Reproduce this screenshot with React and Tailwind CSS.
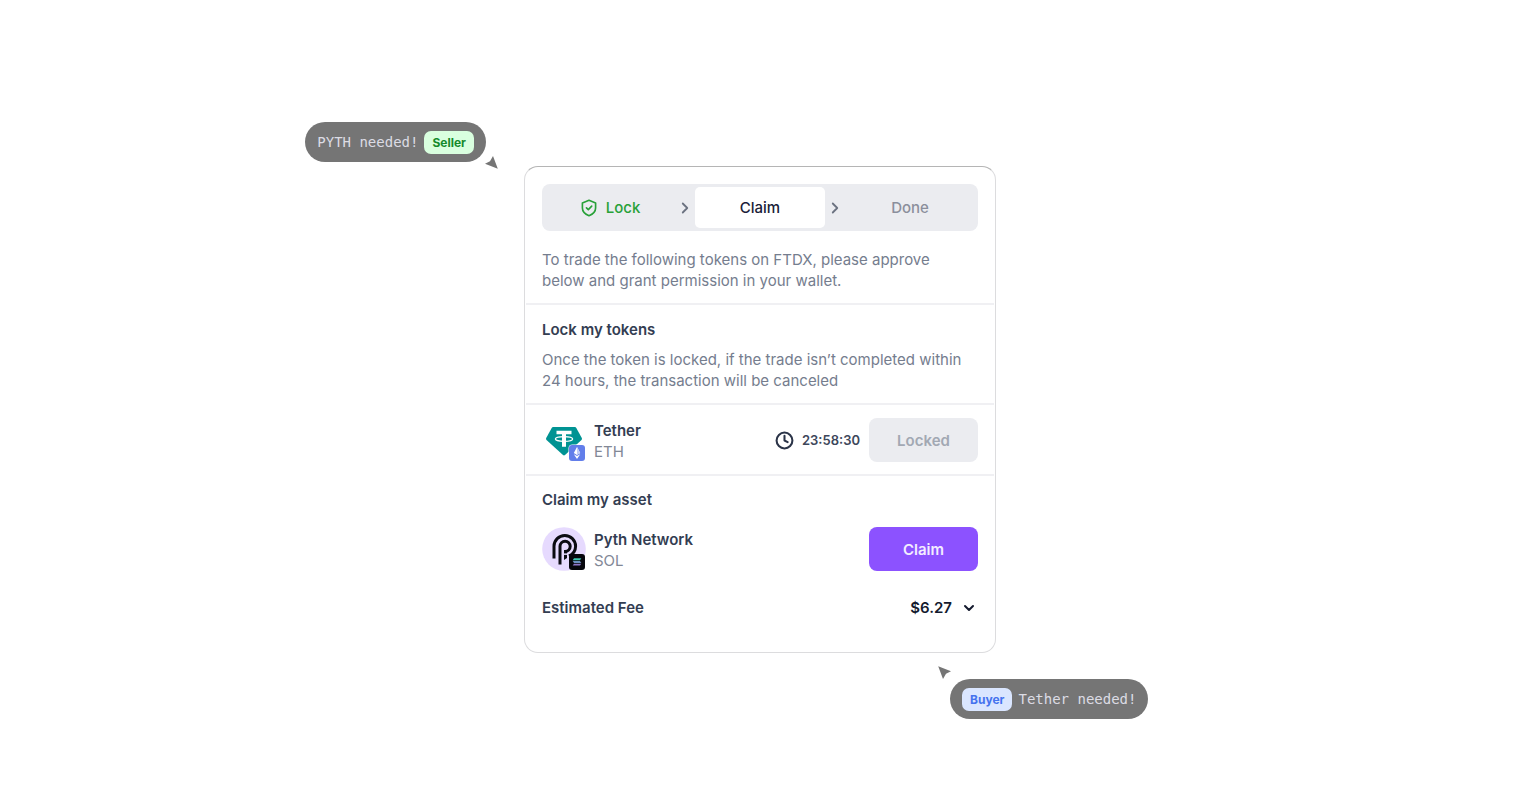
import { ChevronDown, ChevronRight, Clock } from 'lucide-react'

const MONO = "font-['DejaVu_Sans_Mono',monospace]"

function ShieldIcon() {
  return (
    <svg viewBox="0 0 24 24" className="w-[18px] h-[18px]" fill="none" stroke="currentColor" strokeWidth="2.2" strokeLinecap="round" strokeLinejoin="round">
      <path d="M12 1.8 L20.8 5.2 V12 C20.8 17 17 20.3 12 22.2 C7 20.3 3.2 17 3.2 12 V5.2 Z" />
      <path d="M8.6 11.8 L11.1 14.2 L15.6 9.6" />
    </svg>
  )
}

function TetherLogo() {
  return (
    <svg viewBox="0 0 44 44" className="w-11 h-11">
      <path d="M11.2 9 H32.8 Q33.8 9 34.3 9.9 L39.8 20.1 Q40.3 21.1 39.5 21.9 L23 37 Q22 37.9 21 37 L4.5 21.9 Q3.7 21.1 4.2 20.1 L9.7 9.9 Q10.2 9 11.2 9 Z" fill="#009393" />
      <path d="M14.5 12.8 H29.5 V16.3 H24 V28.8 H20 V16.3 H14.5 Z" fill="#fff" />
      <ellipse cx="22" cy="21" rx="8.6" ry="2.4" fill="none" stroke="#fff" strokeWidth="1.3" />
      <rect x="26.5" y="26.5" width="17" height="17" rx="4" fill="#fff" />
      <rect x="27" y="27" width="16" height="16" rx="3" fill="#627eea" />
      <path d="M35 29 L31.8 35.1 L35 37 L38.2 35.1 Z M31.8 36.3 L35 41 L38.2 36.3 L35 38.1 Z" fill="#fff" />
      <path d="M35 29 V37 L38.2 35.1 Z" fill="#c0cbf6" />
    </svg>
  )
}

function PythLogo() {
  return (
    <svg viewBox="0 0 44 44" className="w-11 h-11">
      <circle cx="22" cy="22" r="21.8" fill="#e6dafe" />
      <g fill="none" stroke="#0b0b12" strokeWidth="3">
        <path d="M12 31.5 V19.3 A10.8 10.8 0 0 1 33.6 19.3 A10.8 10.8 0 0 1 27 29" />
        <path d="M18 37.5 V19.3 A5.1 5.1 0 0 1 28.2 19.3 A5.1 5.1 0 0 1 23.1 24.4" />
      </g>
      <path d="M22 22.9 H25 V31 L22 33 Z" fill="#0b0b12" />
      <path d="M22 26.4 H25.5 V27.9 H22 Z" fill="#e6dafe" />
      <rect x="27" y="27" width="16" height="16" rx="3" fill="#07070d" />
      <path d="M32 31.3 H39.3 L38 33.2 H30.7 Z" fill="#3fc9b0" />
      <path d="M30.7 34 H38 L39.3 35.9 H32 Z" fill="#6b8fc0" />
      <path d="M32 36.7 H39.3 L38 38.6 H30.7 Z" fill="#8e77c8" />
    </svg>
  )
}

function Pointer({ className }) {
  return (
    <svg viewBox="0 0 13 13" className={`absolute w-[13px] h-[13px] ${className}`} fill="#757575">
      <path d="M0.2 0.2 L13 5.2 L8 7.8 L5 13 Z" />
    </svg>
  )
}

function Bubble({ className, children }) {
  return (
    <div className={`absolute flex items-center gap-1.5 h-10 px-3 rounded-full bg-[#757575] text-[#dcdce4] text-sm whitespace-nowrap ${MONO} ${className}`}>
      {children}
    </div>
  )
}

function Tag({ className, children }) {
  return (
    <span className={`h-[23px] px-2 rounded-[7px] font-['Inter',sans-serif] text-xs leading-[23px] font-bold ${className}`}>
      {children}
    </span>
  )
}

function Steps() {
  return (
    <ol className="grid grid-cols-[1fr_20px_1fr_20px_1fr] items-center h-[47px] p-[3px] rounded-lg bg-[#ebecf0] font-medium">
      <li className="flex items-center justify-center gap-2 text-[#28a138]">
        <ShieldIcon />
        Lock
      </li>
      <li aria-hidden="true"><ChevronRight size={18} strokeWidth={2.4} className="mx-auto text-[#6b7280]" /></li>
      <li aria-current="step" className="flex items-center justify-center h-full rounded-[5px] bg-white text-[#1a2138]">Claim</li>
      <li aria-hidden="true"><ChevronRight size={18} strokeWidth={2.4} className="mx-auto text-[#6b7280]" /></li>
      <li className="text-center text-[#8b8f9c]">Done</li>
    </ol>
  )
}

function Token({ logo, name, chain, children }) {
  return (
    <div className="flex items-center">
      {logo}
      <div className="ml-2 pt-0.5">
        <div className="font-semibold text-[#333d52]">{name}</div>
        <div className="text-[#828896]">{chain}</div>
      </div>
      <div className="flex items-center ml-auto">{children}</div>
    </div>
  )
}

export default function App() {
  return (
    <main className="flex justify-center min-h-screen pt-[166px] pb-[138px] bg-white font-['Inter',sans-serif] text-[15px] leading-[21px]">
      <div className="relative self-start w-[472px]">
        <Bubble className="right-full bottom-full mr-[38px] mb-1">
          PYTH needed!
          <Tag className="bg-[#d9ffdf] text-[#158a2c]">Seller</Tag>
        </Bubble>
        <Pointer className="right-full bottom-full mr-[26px] -mb-[3px] rotate-180" />

        <section className="px-px pb-[34px] border border-[#dcdcde] border-t-[#b5b5b5] rounded-[14px] bg-white">
          <div className="px-4 pt-[17px] pb-3 border-b-2 border-[#f0f0f3]">
            <Steps />
            <p className="pr-6 mt-[18px] text-[#757d8e]">
              To trade the following tokens on FTDX, please approve below and grant permission in your wallet.
            </p>
          </div>

          <div className="px-4 pt-[14px] pb-3 border-b-2 border-[#f0f0f3]">
            <h2 className="font-semibold text-[#333d52]">Lock my tokens</h2>
            <p className="mt-[9px] text-[#757d8e]">
              Once the token is locked, if the trade isn’t completed within 24 hours, the transaction will be canceled
            </p>
          </div>

          <div className="px-4 pt-[13px] pb-3 border-b-2 border-[#f0f0f3]">
            <Token logo={<TetherLogo />} name="Tether" chain="ETH">
              <Clock size={19} strokeWidth={2.6} className="text-[#2b3448]" />
              <time className="ml-2 mr-[9px] text-[13px] font-semibold text-[#3d475b]">23:58:30</time>
              <button disabled className="w-[109px] h-11 rounded-lg bg-[#ebecf0] font-semibold text-[#a2a8b3]">Locked</button>
            </Token>
          </div>

          <div className="px-4 pt-[13px]">
            <h2 className="mb-[17px] font-semibold text-[#333d52]">Claim my asset</h2>
            <Token logo={<PythLogo />} name="Pyth Network" chain="SOL">
              <button className="w-[109px] h-11 rounded-lg bg-[#8c52ff] font-semibold text-[#f3edff]">Claim</button>
            </Token>
            <div className="flex items-center justify-between mt-[26px] font-semibold">
              <span className="text-[#333d52]">Estimated Fee</span>
              <button className="flex items-center gap-[9px] pr-px text-[#141a2e]">
                $6.27
                <ChevronDown size={16} strokeWidth={3} />
              </button>
            </div>
          </div>
        </section>

        <Pointer className="left-full top-full -ml-[58px] mt-[13px]" />
        <Bubble className="left-full top-full -ml-[46px] mt-[26px]">
          <Tag className="bg-[#dae6ff] text-[#4573ee]">Buyer</Tag>
          Tether needed!
        </Bubble>
      </div>
    </main>
  )
}
